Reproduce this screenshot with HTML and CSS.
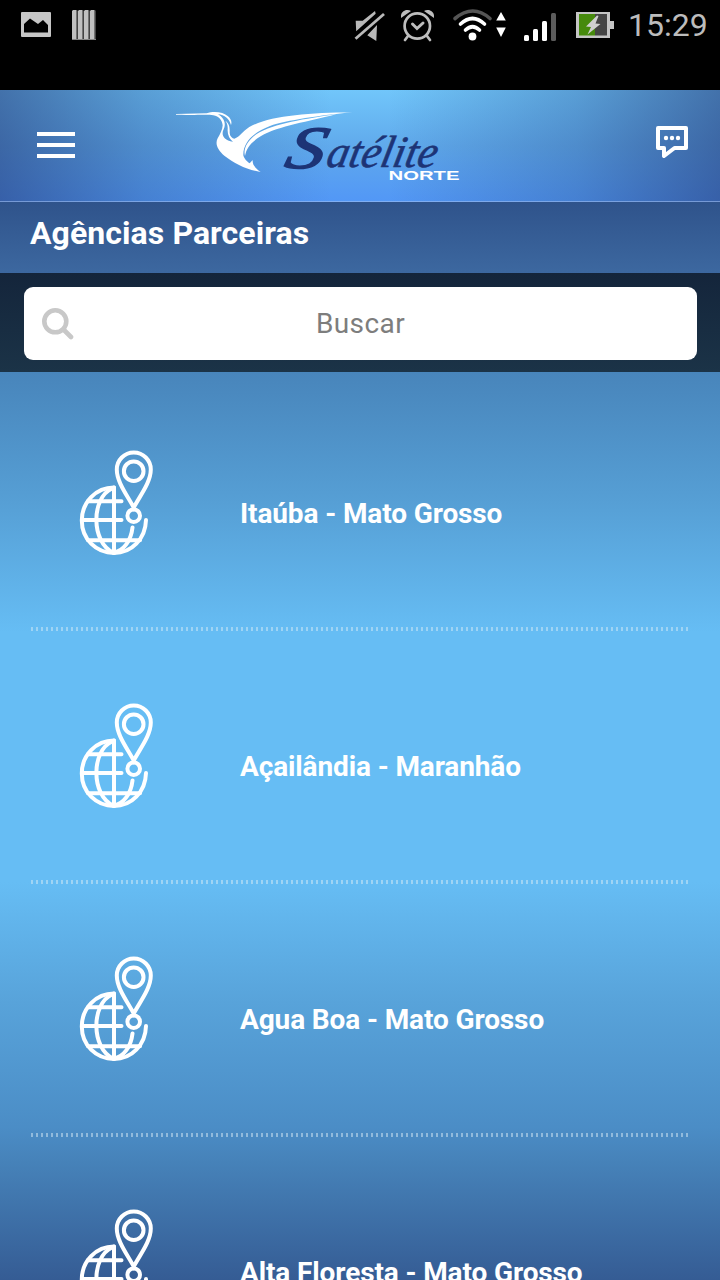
FILE: index.html
```html
<!DOCTYPE html>
<html lang="pt-BR">
<head>
    <meta charset="UTF-8"/>
    <meta name="viewport" content="width=device-width, initial-scale=1"/>
    <title>Agências Parceiras</title>
    <link rel="stylesheet" href="styles.css">
</head>
<body>

<!-- Shared icon -->
<svg class="defs" width="0" height="0">
    <symbol id="globe-pin" viewBox="0 0 120 140">
        <g fill="none" stroke="#fff" stroke-width="4" stroke-linecap="round">
            <path d="M54 57.5C36 57.5 21.8 72 21.8 90.5S36 123 54 123c17.500 0 31.500-14 32-33"/>
            <path d="M54 57.500V123"/>
            <path d="M52 58.500C31 68 31 112 53 122.500M54 122.500c10-2 17-12 18.500-25"/>
            <path d="M28 71.300h33.500M22 90h39.500M28 110.300h52"/>
            <path d="M73.700 77.500C67 65 56.800 52 56.800 39.500a17 17 0 0 1 34 0C90.800 52 80.500 65 73.700 77.500z"/>
            <circle cx="73.700" cy="41.200" r="9.800"/>
            <circle cx="73.700" cy="85.700" r="6.300"/>
        </g>
    </symbol>
</svg>

<!-- Status bar -->
<div class="status-bar">
    <svg class="status-left" width="110" height="50" viewBox="0 0 110 50">
        <path fill="#c6c6c6" fill-rule="evenodd" d="M22 12h28q1 0 1 1v23q0 1-1 1H22q-1 0-1-1V13q0-1 1-1zm2 20.500h24V25l-5-5-5 4-8-5.500-6 5.500z"/>
        <g fill="#c0c0c0">
            <path d="M72 11l1-1h3.500v29.500H72zM78 11l1-1h3.500v29.500H78zM84 11l1-1h3.500v29.500H84zM90 11l1-1h3.500v29.500H90z"/>
        </g>
        <path stroke="#858585" d="M77 10.500V39M83 10.500V39M89 10.500V39M95 10.500V39M72 39.500h24"/>
    </svg>
    <svg class="status-right" width="275" height="50" viewBox="345 0 275 50">
        <!-- muted -->
        <path fill="#b9b9b9" d="M355.700 20.700h7L375 11l.7 2.800-19.500 17.500zM377 25l-.700 16-9-5.800z"/>
        <path stroke="#b9b9b9" stroke-width="2.800" d="M355.500 38.800L384 14"/>
        <!-- alarm -->
        <g fill="none" stroke="#bdbdbd" stroke-width="2.700" stroke-linecap="round">
            <circle cx="417.300" cy="26" r="12.700"/>
            <path d="M408 36l-3 4M427 36l3 4"/>
            <path stroke-width="3" d="M412.500 24l4.500 4.500 6-5.500"/>
        </g>
        <path fill="#bdbdbd" d="M401 18q-1-6 5-8 3-.500 5 1zM434 18q1-6-5-8-3-.500-5 1z"/>
        <!-- wifi -->
        <g fill="none" stroke="#fff" stroke-width="3.600" stroke-linecap="round">
            <path stroke="#555" d="M455 18.500q18-15 35 0"/>
            <path d="M460.500 24q12-11 24 0M465.500 30q7-6.500 14 0"/>
        </g>
        <circle cx="472.500" cy="36.500" r="3.900" fill="#fff"/>
        <path fill="#fff" d="M501 12l4.800 8.500h-9.600zM496.200 27.500h9.600L501 37z"/>
        <!-- signal -->
        <rect x="524" y="35" width="5" height="6" rx="1.500" fill="#fff"/>
        <rect x="533" y="29" width="5" height="12" rx="1.500" fill="#fff"/>
        <rect x="542" y="21" width="5" height="20" rx="1.500" fill="#fff"/>
        <rect x="551" y="13" width="5" height="28" rx="1.500" fill="#5c5c5c"/>
        <!-- battery -->
        <path fill="#c5c5c5" d="M576 12h34v9h4v8h-4v9h-34z"/>
        <path fill="#468a0c" d="M579 14h16v21.500h-16z"/>
        <path fill="#454545" d="M595 14h12v21.500h-12z"/>
        <path fill="#d0d0d0" d="M597 15.500L586 26.500l5 .5-3.500 7.500 13-10.500-5-.5 3-7.500z"/>
    </svg>
    <span class="clock">15:29</span>
</div>

<!-- Header -->
<header class="header">
    <svg class="menu" width="38" height="27" viewBox="0 0 38 27">
        <path stroke="#fff" stroke-width="4" d="M0 2h38M0 13h38M0 24h38"/>
    </svg>
    <svg class="logo" width="300" height="90" viewBox="170 100 300 90">
        <g transform="translate(160 90) scale(.3333)">
            <path fill="#fff" d="M48 72L140 70C160 62 190 65 204 79C214 88 216 97 213 105C208 87 194 74 174 73C192 84 200 100 190 120C184 134 190 151 219 155C208 147 202 133 203 118C204 106 200 97 196 92C211 102 209 119 209 129C210 140 217 145 223 146C241 140 244 127 268 111C330 77 440 69 577 67C480 76 380 91 330 108C280 127 249 157 250 196C252 207 263 216 269 220L278 210C277 225 285 233 302 246C260 239 224 221 193 197C174 181 164 162 173 145C180 133 188 119 188 106C187 92 177 79 160 76C142 73 126 76 48 74z"/>
            <path fill="#fff" d="M255 198C249 177 262 151 290 132C343 99 436 87 530 72C445 96 358 106 302 139C271 158 260 174 255 198z"/>
        </g>
        <g class="logo-name">
            <text transform="translate(283 167.500) skewX(-14)" font-size="60" stroke-width="1.400" textLength="39" lengthAdjust="spacingAndGlyphs">S</text>
            <text transform="translate(325 166.500) skewX(-12)" font-size="45" stroke-width=".6" textLength="110" lengthAdjust="spacingAndGlyphs">atélite</text>
        </g>
        <text class="logo-sub" x="388.500" y="180" font-size="13.500" textLength="71" lengthAdjust="spacingAndGlyphs">NORTE</text>
    </svg>
    <svg class="chat" width="32" height="33" viewBox="0 0 32 33">
        <path fill="none" stroke="#fff" stroke-width="4" stroke-linejoin="round" d="M2 2h28v20H18.500L8 30v-8H2z"/>
        <circle cx="10" cy="12" r="2.200" fill="#fff"/>
        <circle cx="16" cy="12" r="2.200" fill="#fff"/>
        <circle cx="22" cy="12" r="2.200" fill="#fff"/>
    </svg>
</header>

<main class="content">
    <h1>Agências Parceiras</h1>

    <div class="search-bar">
        <div class="search-box">
            <svg class="search-icon" width="32" height="32" viewBox="0 0 32 32">
                <circle cx="13.300" cy="13.300" r="11" fill="none" stroke="#c8c8c8" stroke-width="4.600"/>
                <path stroke="#c8c8c8" stroke-width="4.600" stroke-linecap="round" d="M21.500 21.500l7.500 7.500"/>
            </svg>
            <span>Buscar</span>
        </div>
    </div>

    <div class="list">
        <div class="item">
            <svg class="item-icon"><use href="#globe-pin"/></svg>
            <p>Itaúba - Mato Grosso</p>
        </div>
        <div class="item">
            <svg class="item-icon"><use href="#globe-pin"/></svg>
            <p>Açailândia - Maranhão</p>
        </div>
        <div class="item">
            <svg class="item-icon"><use href="#globe-pin"/></svg>
            <p>Agua Boa - Mato Grosso</p>
        </div>
        <div class="item">
            <svg class="item-icon"><use href="#globe-pin"/></svg>
            <p>Alta Floresta - Mato Grosso</p>
        </div>
    </div>
</main>

</body>
</html>
```
FILE: styles.css
```css
body {
    margin: 0;
    height: 1280px;
    overflow: hidden;
    background: #000;
    color: #fff;
    font-family: Roboto, sans-serif;
    display: flex;
    flex-direction: column;
}

svg {
    display: block;
    flex-shrink: 0;
}

.defs {
    position: absolute;
}

.status-bar {
    height: 90px;
    flex-shrink: 0;
    display: flex;
    align-items: flex-start;
    background: #000;
}

.status-right {
    margin-left: auto;
}

.clock {
    width: 92px;
    margin-left: 8px;
    font-size: 32px;
    line-height: 50px;
    color: #bcbcbc;
}

.header {
    height: 112px;
    flex-shrink: 0;
    box-sizing: border-box;
    display: flex;
    align-items: flex-start;
    padding: 10px 32px 0 37px;
    border-bottom: 1px solid rgba(160, 190, 240, 0.6);
    background:
        linear-gradient(to right, rgba(38, 62, 122, 0.62), rgba(45, 85, 145, 0.35) 20%, rgba(50, 95, 165, 0) 46%, rgba(50, 95, 165, 0) 54%, rgba(45, 85, 145, 0.35) 80%, rgba(38, 62, 122, 0.62)),
        linear-gradient(#71c6fa, #60aaec 50%, #5297f6);
    background-origin: border-box;
}

.menu {
    margin-top: 32px;
}

.logo {
    margin-left: 95px;
}

.logo-name {
    fill: #1d3476;
    stroke: #1d3476;
    font-family: "Liberation Serif", serif;
    font-style: italic;
}

.logo-sub {
    fill: #fff;
    font-family: "Liberation Sans", sans-serif;
    font-weight: bold;
}

.chat {
    margin-left: auto;
    margin-top: 26px;
}

.content {
    flex: 1;
    min-height: 0;
    overflow: hidden;
    background: linear-gradient(#2f538b 0, #3c679f 68px, #4885bb 170px, #569fd5 300px, #66bdf4 430px, #66bdf4 680px, #58a3da 800px, #4b8dc6 925px, #4682b9 960px, #355c94 1078px);
}

h1 {
    height: 71px;
    margin: 0;
    padding-left: 30px;
    box-sizing: border-box;
    font-size: 32px;
    font-weight: bold;
    line-height: 62px;
    letter-spacing: 0.08px;
}

.search-bar {
    height: 99px;
    box-sizing: border-box;
    padding: 14px 23px 12px 24px;
    background: linear-gradient(#14253b, #1b3347);
}

.search-box {
    height: 73px;
    box-sizing: border-box;
    display: flex;
    align-items: center;
    padding: 0 18px;
    border-radius: 9px;
    background: #fff;
    color: #7d7d7d;
    font-size: 28px;
    letter-spacing: 0.4px;
}

.search-box span {
    flex: 1;
    margin-right: 32px;
    text-align: center;
}

.list {
    padding: 6px 31px 0;
}

.item {
    position: relative;
    height: 253px;
    display: flex;
    align-items: flex-start;
}

/* dotted separator */
.item::after {
    content: "";
    position: absolute;
    left: 0;
    right: 0;
    bottom: 0;
    height: 4px;
    background: repeating-linear-gradient(to right, rgba(215, 235, 245, 0.5) 0, rgba(215, 235, 245, 0.5) 2px, transparent 2px, transparent 5px);
}

.item-icon {
    width: 120px;
    height: 140px;
    margin: 52px 0 0 29px;
}

.item p {
    margin: 0 0 0 60px;
    font-size: 28px;
    font-weight: bold;
    line-height: 272px;
    letter-spacing: -0.12px;
    white-space: nowrap;
}
```
